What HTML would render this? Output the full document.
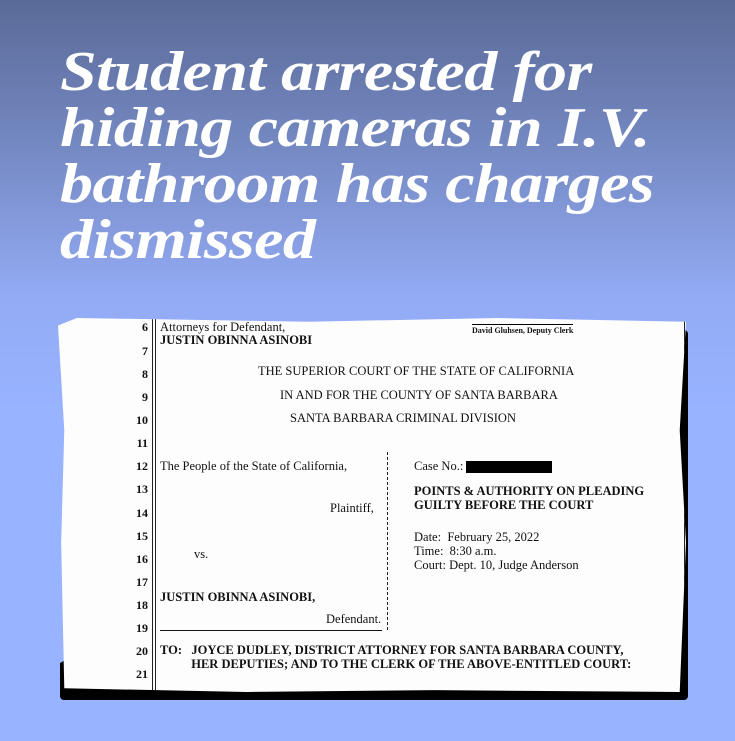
<!DOCTYPE html>
<html><head><meta charset="utf-8"><style>
*{margin:0;padding:0}
body{width:735px;height:741px;overflow:hidden;background:linear-gradient(#5a6a97 0%,#7589c3 20%,#93abf4 40%,#98b3ff 55%,#98b3ff 100%);position:relative;font-family:"Liberation Serif",serif}
h1{position:absolute;left:60px;top:44px;color:#fff;font:italic bold 56px/56px "Liberation Serif",serif;letter-spacing:-0.5px;width:580px;transform:scaleX(1.18);transform-origin:0 0;white-space:nowrap}
.shadow{position:absolute;left:60px;top:330px;width:628px;height:370px;background:#000;border-radius:4px;clip-path:polygon(0 90%,99% 0,100% 0,100% 100%,0 100%)}
.paper{position:absolute;left:58px;top:318px;width:628px;height:374px;background:#fdfdfd;clip-path:polygon(0 2%,3% 0,40% 1%,70% 0,100% 1%,99% 30%,100% 60%,99% 100%,60% 99.5%,30% 100%,1% 99%,0.5% 60%,1% 30%)}
.t{position:absolute;font-size:12.5px;color:#111;white-space:nowrap}
.b{font-weight:bold}
.n{position:absolute;left:76px;width:14px;text-align:right;font-weight:bold;font-size:12px}
.vl{position:absolute;top:0;bottom:0;width:1px;background:#222}
</style></head><body>
<h1>Student arrested for<br>hiding cameras in I.V.<br>bathroom has charges<br>dismissed</h1>
<div class="shadow"></div>
<div class="paper">
<div class="vl" style="left:94px"></div><div class="vl" style="left:97px"></div>
<div class="vl" style="left:626px"></div>
<div class="n t" style="top:2px">6</div><div class="n t" style="top:26px">7</div><div class="n t" style="top:49px">8</div><div class="n t" style="top:72px">9</div><div class="n t" style="top:95px">10</div><div class="n t" style="top:118px">11</div><div class="n t" style="top:141px">12</div><div class="n t" style="top:164px">13</div><div class="n t" style="top:188px">14</div><div class="n t" style="top:211px">15</div><div class="n t" style="top:234px">16</div><div class="n t" style="top:257px">17</div><div class="n t" style="top:280px">18</div><div class="n t" style="top:303px">19</div><div class="n t" style="top:326px">20</div><div class="n t" style="top:349px">21</div>
<div class="t" style="left:102px;top:2px">Attorneys for Defendant,</div>
<div class="t b" style="left:102px;top:15px">JUSTIN OBINNA ASINOBI</div>
<div class="t b" style="left:414px;top:6px;font-size:8px;border-top:1px solid #000;padding-top:1px">David Gluhsen, Deputy Clerk</div>
<div class="t" style="left:200px;top:46px">THE SUPERIOR COURT OF THE STATE OF CALIFORNIA</div>
<div class="t" style="left:222px;top:70px">IN AND FOR THE COUNTY OF SANTA BARBARA</div>
<div class="t" style="left:232px;top:93px">SANTA BARBARA CRIMINAL DIVISION</div>
<div class="t" style="left:102px;top:141px">The People of the State of California,</div>
<div class="t" style="left:272px;top:183px">Plaintiff,</div>
<div class="t" style="left:136px;top:229px">vs.</div>
<div class="t b" style="left:102px;top:272px">JUSTIN OBINNA ASINOBI,</div>
<div class="t" style="left:268px;top:294px">Defendant.</div>
<div style="position:absolute;left:102px;top:312px;width:222px;height:1px;background:#111"></div>
<div style="position:absolute;left:326px;top:134px;width:3px;height:178px;border-right:1px dashed #222"></div>
<div class="t" style="left:356px;top:141px">Case No.: <span style="display:inline-block;width:86px;height:12px;background:#000;vertical-align:middle"></span></div>
<div class="t b" style="left:356px;top:166px;line-height:14px">POINTS &amp; AUTHORITY ON PLEADING<br>GUILTY BEFORE THE COURT</div>
<div class="t" style="left:356px;top:212px;line-height:14px">Date:&nbsp; February 25, 2022<br>Time:&nbsp; 8:30 a.m.<br>Court: Dept. 10, Judge Anderson</div>
<div class="t b" style="left:102px;top:325px;line-height:14px">TO:&nbsp;&nbsp; JOYCE DUDLEY, DISTRICT ATTORNEY FOR SANTA BARBARA COUNTY,<br>&nbsp;&nbsp;&nbsp;&nbsp;&nbsp;&nbsp;&nbsp;&nbsp;&nbsp; HER DEPUTIES; AND TO THE CLERK OF THE ABOVE-ENTITLED COURT:</div>
</div>
</body></html>
